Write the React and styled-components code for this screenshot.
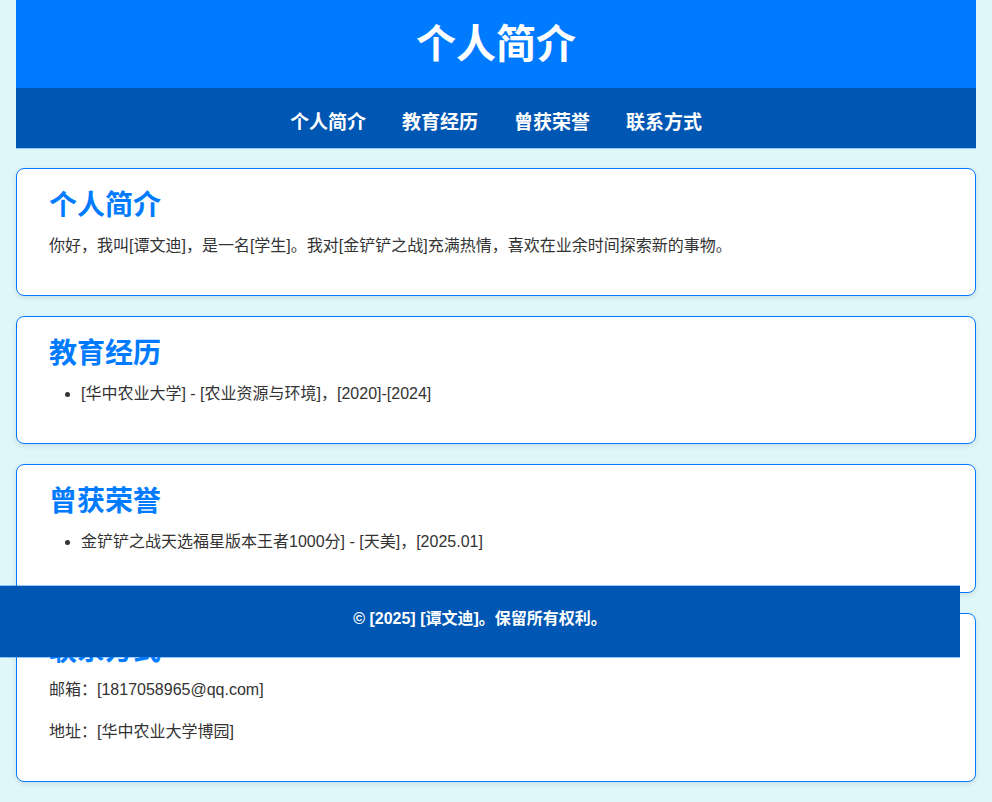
import React from 'react'
import styled, { createGlobalStyle } from 'styled-components'

const GlobalStyle = createGlobalStyle`
    body {
        margin: 0;
        background-color: #e0f7fa;
        font-family: "Liberation Sans", "Noto Sans CJK SC", sans-serif;
        color: #333;
        line-height: 1.6;
    }
`;

const Page = styled.div`
    padding: 0 16px 20px;
`;

const Header = styled.header`
    background-color: #007bff;
    color: white;
    text-align: center;
    padding: 20px 0;
`;

const Title = styled.h1`
    margin: 0;
    font-size: 40px;
    line-height: 48px;
    font-weight: bold;
`;

const Nav = styled.nav`
    background-color: #0056b3;
    display: flex;
    justify-content: center;
    gap: 36px;
    padding: 17px 0 7px;
    box-shadow: 0 1px 0 rgba(0, 123, 255, 0.35);
`;

const NavLink = styled.a`
    color: white;
    text-decoration: none;
    font-weight: bold;
    font-size: 19px;
    line-height: 36px;
`;

const Main = styled.main`
    padding-top: 20px;
    display: flex;
    flex-direction: column;
    gap: 20px;
`;

const Section = styled.section`
    background-color: white;
    border: 1px solid #007bff;
    border-radius: 8px;
    padding: 20px 32px 21px;
    box-shadow: 0 2px 5px rgba(0, 0, 0, 0.1);
`;

const SectionTitle = styled.h2`
    margin: 0 0 10px;
    color: #007bff;
    font-size: 28px;
    line-height: 1.2;
`;

const Text = styled.p`
    margin: 0 0 16px;
    font-size: 16px;
`;

const List = styled.ul`
    margin: 0 0 16px;
    padding-left: 32px;
`;

const ListItem = styled.li`
    font-size: 16px;
`;

const Footer = styled.footer`
    position: absolute;
    top: 586px;
    left: 0;
    width: 960px;
    background-color: #0056b3;
    color: white;
    text-align: center;
    font-weight: bold;
    font-size: 16px;
    line-height: 26px;
    padding: 20px 0 25px;
    box-shadow: 0 1px 0 rgba(0, 123, 255, 0.4), 0 -1px 0 rgba(0, 123, 255, 0.4);
`;

const App = () => {
  return (
    <>
      <GlobalStyle />
      <Page>
        <Header>
          <Title>个人简介</Title>
        </Header>
        <Nav>
          <NavLink href="#about">个人简介</NavLink>
          <NavLink href="#education">教育经历</NavLink>
          <NavLink href="#honors">曾获荣誉</NavLink>
          <NavLink href="#contact">联系方式</NavLink>
        </Nav>
        <Main>
          <Section id="about">
            <SectionTitle>个人简介</SectionTitle>
            <Text>你好，我叫[谭文迪]，是一名[学生]。我对[金铲铲之战]充满热情，喜欢在业余时间探索新的事物。</Text>
          </Section>
          <Section id="education">
            <SectionTitle>教育经历</SectionTitle>
            <List>
              <ListItem>[华中农业大学] - [农业资源与环境]，[2020]-[2024]</ListItem>
            </List>
          </Section>
          <Section id="honors">
            <SectionTitle>曾获荣誉</SectionTitle>
            <List>
              <ListItem>金铲铲之战天选福星版本王者1000分] - [天美]，[2025.01]</ListItem>
            </List>
          </Section>
          <Section id="contact">
            <SectionTitle>联系方式</SectionTitle>
            <Text>邮箱：[1817058965@qq.com]</Text>
            <Text>地址：[华中农业大学博园]</Text>
          </Section>
        </Main>
      </Page>
      <Footer>© [2025] [谭文迪]。保留所有权利。</Footer>
    </>
  )
}

export default App
